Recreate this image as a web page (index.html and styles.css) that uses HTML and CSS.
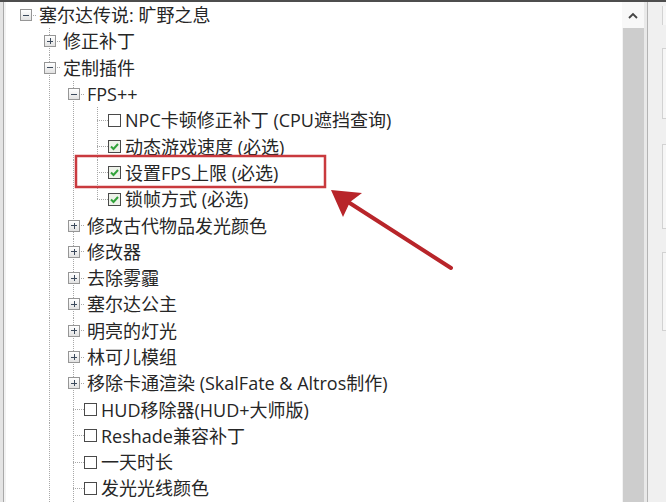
FILE: index.html
```html
<!DOCTYPE html>
<html lang="zh">
<head>
  <meta charset="UTF-8">
  <title>Mod Tree</title>
  <link rel="stylesheet" href="styles.css">
</head>
<body>
  <div class="window">
    <div class="topline"></div>
    <div class="main">
      <div class="frame-left"></div>

      <!-- tree view -->
      <div class="tree">
        <div class="row"><span class="g root"><span class="box minus"></span></span><span class="label">塞尔达传说: 旷野之息</span></div>
        <div class="row"><span class="g"></span><span class="g t"><span class="box plus"></span></span><span class="label">修正补丁</span></div>
        <div class="row"><span class="g"></span><span class="g t"><span class="box minus"></span></span><span class="label">定制插件</span></div>
        <div class="row"><span class="g"></span><span class="g v"></span><span class="g t"><span class="box minus"></span></span><span class="label">FPS++</span></div>
        <div class="row"><span class="g"></span><span class="g v"></span><span class="g v"></span><span class="g t"></span><span class="check"></span><span class="label">NPC卡顿修正补丁 (CPU遮挡查询)</span></div>
        <div class="row"><span class="g"></span><span class="g v"></span><span class="g v"></span><span class="g t"></span><span class="check on"></span><span class="label">动态游戏速度 (必选)</span></div>
        <div class="row"><span class="g"></span><span class="g v"></span><span class="g v"></span><span class="g t"></span><span class="check on"></span><span class="label">设置FPS上限 (必选)</span></div>
        <div class="row"><span class="g"></span><span class="g v"></span><span class="g v"></span><span class="g l"></span><span class="check on"></span><span class="label">锁帧方式 (必选)</span></div>
        <div class="row"><span class="g"></span><span class="g v"></span><span class="g t"><span class="box plus"></span></span><span class="label">修改古代物品发光颜色</span></div>
        <div class="row"><span class="g"></span><span class="g v"></span><span class="g t"><span class="box plus"></span></span><span class="label">修改器</span></div>
        <div class="row"><span class="g"></span><span class="g v"></span><span class="g t"><span class="box plus"></span></span><span class="label">去除雾霾</span></div>
        <div class="row"><span class="g"></span><span class="g v"></span><span class="g t"><span class="box plus"></span></span><span class="label">塞尔达公主</span></div>
        <div class="row"><span class="g"></span><span class="g v"></span><span class="g t"><span class="box plus"></span></span><span class="label">明亮的灯光</span></div>
        <div class="row"><span class="g"></span><span class="g v"></span><span class="g t"><span class="box plus"></span></span><span class="label">林可儿模组</span></div>
        <div class="row"><span class="g"></span><span class="g v"></span><span class="g t"><span class="box plus"></span></span><span class="label">移除卡通渲染 (SkalFate &amp; Altros制作)</span></div>
        <div class="row"><span class="g"></span><span class="g v"></span><span class="g t"></span><span class="check"></span><span class="label">HUD移除器(HUD+大师版)</span></div>
        <div class="row"><span class="g"></span><span class="g v"></span><span class="g t"></span><span class="check"></span><span class="label">Reshade兼容补丁</span></div>
        <div class="row"><span class="g"></span><span class="g v"></span><span class="g t"></span><span class="check"></span><span class="label">一天时长</span></div>
        <div class="row"><span class="g"></span><span class="g v"></span><span class="g t"></span><span class="check"></span><span class="label">发光光线颜色</span></div>
      </div>

      <div class="scrollbar">
        <div class="up">
          <svg width="10" height="7" viewBox="0 0 10 7"><path d="M1 6 L5 2 L9 6" fill="none" stroke="#444" stroke-width="1.8"/></svg>
        </div>
        <div class="thumb"></div>
      </div>

      <div class="side">
        <div class="ctl c0"></div>
        <div class="ctl c1"></div>
        <div class="ctl c2"></div>
        <div class="ctl c3"></div>
      </div>
    </div>

    <!-- annotation: red box + arrow -->
    <svg class="annot" width="666" height="502" viewBox="0 0 666 502">
      <rect x="76" y="156" width="249" height="31" fill="none" stroke="#c93a3e" stroke-width="2.5"/>
      <line x1="451" y1="268" x2="345" y2="200" stroke="#b8252a" stroke-width="4" stroke-linecap="round"/>
      <polygon points="331,190 362,193 350,202 343,217" fill="#b8252a"/>
    </svg>
  </div>
</body>
</html>
```

FILE: styles.css
```css
body { margin: 0; background: #fff; }
.window {
  position: relative; width: 666px; height: 502px; overflow: hidden;
  display: flex; flex-direction: column;
  font-family: "Open Sans", "Noto Sans CJK SC", sans-serif; color: #262626;
}
.topline { height: 2px; background: #4d4d4d; flex: none; }
.main { flex: 1; display: flex; min-height: 0; }

.frame-left {
  width: 3px; flex: none; background: #e4e4e4;
  border-right: 1px solid #a9a9a9; margin-right: 4px;
  box-shadow: 2px 0 0 #f2f2f2;
}

/* tree */
.tree { flex: 1; padding-left: 5px; background: #fff; }
.row { display: flex; align-items: center; height: 26.3px; white-space: nowrap; }
.label { font-size: 18px; margin-left: 2px; line-height: 26px; }
.check + .label { margin-left: 4px; }

.g { width: 24px; height: 100%; flex: none; display: flex; align-items: center; justify-content: center; }
.g.v {
  background: repeating-linear-gradient(to bottom, #a8a8a8 0 1px, transparent 1px 2px) 12px 0 / 1px 100% no-repeat;
}
.g.t {
  background:
    repeating-linear-gradient(to bottom, #a8a8a8 0 1px, transparent 1px 2px) 12px 0 / 1px 100% no-repeat,
    repeating-linear-gradient(to right, #a8a8a8 0 1px, transparent 1px 2px) 12px 50% / 12px 1px no-repeat;
}
.g.l {
  background:
    repeating-linear-gradient(to bottom, #a8a8a8 0 1px, transparent 1px 2px) 12px 0 / 1px 50% no-repeat,
    repeating-linear-gradient(to right, #a8a8a8 0 1px, transparent 1px 2px) 12px 50% / 12px 1px no-repeat;
}
.g.root {
  background: repeating-linear-gradient(to right, #a8a8a8 0 1px, transparent 1px 2px) 12px 50% / 12px 1px no-repeat;
}

.box {
  width: 12px; height: 12px; box-sizing: border-box; margin-left: 1px;
  border: 1px solid #969696; background: linear-gradient(#fff, #e2e2e2);
  display: flex; align-items: center; justify-content: center;
}
.box::before { content: ""; width: 6px; height: 1px; background: #3c4a5c; }
.box.plus { position: relative; }
.box.plus::after {
  content: ""; position: absolute; left: 5px; top: 2px; width: 1px; height: 6px; background: #3c4a5c;
}

.check {
  width: 13px; height: 13px; box-sizing: border-box; flex: none; margin-left: -1px;
  border: 1px solid #4a4a4a; background: #fff;
}
.check.on {
  background: #eef2ea url("data:image/svg+xml,%3Csvg xmlns='http://www.w3.org/2000/svg' width='11' height='11'%3E%3Cpath d='M2 5.5 L4.5 8 L9 3' fill='none' stroke='%2331a23a' stroke-width='2'/%3E%3C/svg%3E") center / 11px 11px no-repeat;
}

/* scrollbar */
.scrollbar { width: 22px; flex: none; display: flex; flex-direction: column; background: #f3f3f3; }
.up { height: 26px; display: flex; align-items: center; justify-content: center; background: #f8f8f8; }
.thumb { flex: 1; background: #cdcdcd; margin-left: 1px; }

/* right-hand panel */
.side {
  width: 22px; flex: none; background: #f0f0f0;
  border-left: 3px solid #e9e9e9; box-shadow: inset 1px 0 0 #b4b4b4;
  padding-left: 15px; padding-top: 4px; box-sizing: border-box;
  display: flex; flex-direction: column;
}
.ctl { border: 1px solid #d2d2d2; border-right: none; background: #f6f6f6; flex: none; }
.c0 { height: 19px; border-top: none; border-bottom: none; }
.c1 { height: 69px; margin-top: 23px; }
.c2 { height: 83px; margin-top: 25px; }
.c3 { height: 77px; margin-top: 23px; }

.annot { position: absolute; left: 0; top: 0; pointer-events: none; }
```
